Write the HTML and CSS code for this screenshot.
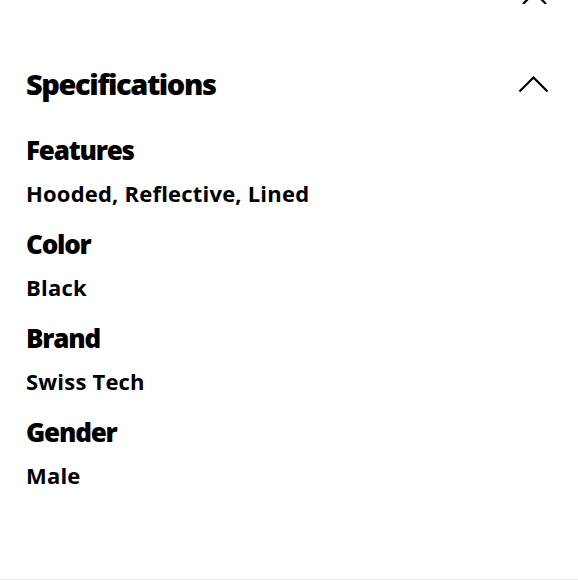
FILE: index.html
```html
<!DOCTYPE html>
<html>
<head>
<meta charset="utf-8">
<link rel="stylesheet" href="styles.css">
</head>
<body>
<div class="panel">
  <div class="prev-icon">
    <svg width="30" height="4" viewBox="0 0 30 4"><path d="M5 4 L28 -19 M28 4 L5 -19" stroke="#000" stroke-width="2.2" fill="none"/></svg>
  </div>
  <div class="section">
    <div class="section-head">
      <h2 class="section-title">Specifications</h2>
      <svg class="chevron" width="31" height="17" viewBox="0 0 31 17"><path d="M1.5 15.5 L15.5 1.5 L29.5 15.5" stroke="#000" stroke-width="2.2" fill="none"/></svg>
    </div>
    <dl class="specs">
      <div class="spec"><dt>Features</dt><dd>Hooded, Reflective, Lined</dd></div>
      <div class="spec"><dt>Color</dt><dd>Black</dd></div>
      <div class="spec"><dt>Brand</dt><dd>Swiss Tech</dd></div>
      <div class="spec"><dt>Gender</dt><dd>Male</dd></div>
    </dl>
  </div>
</div>
</body>
</html>
```
FILE: styles.css
```css
html, body {
  margin: 0;
  padding: 0;
  background: #fff;
}
body {
  font-family: "Open Sans", "Liberation Sans", sans-serif;
  color: #000;
}
.panel {
  height: 579px;
  border-bottom: 1px solid #e3e3e3;
  overflow: hidden;
}
.prev-icon {
  display: flex;
  justify-content: flex-end;
  padding-right: 30px;
  height: 4px;
}
.prev-icon svg {
  display: block;
}
.section {
  padding: 0 29px 0 26px;
}
.section-head {
  display: flex;
  align-items: center;
  justify-content: space-between;
  margin-top: 62px;
}
.section-title {
  margin: 0;
  font-size: 29px;
  font-weight: 800;
  line-height: 36px;
  letter-spacing: -1.4px;
}
.chevron {
  display: block;
}
.specs {
  margin: 32px 0 0 0;
  display: flex;
  flex-direction: column;
  gap: 21px;
}
.spec {
  display: flex;
  flex-direction: column;
  gap: 13px;
}
.spec dt {
  font-size: 26px;
  font-weight: 800;
  line-height: 32px;
  letter-spacing: -1.2px;
}
.spec dd {
  margin: 0;
  font-size: 22px;
  font-weight: 700;
  line-height: 28px;
  letter-spacing: 0.2px;
}
```
